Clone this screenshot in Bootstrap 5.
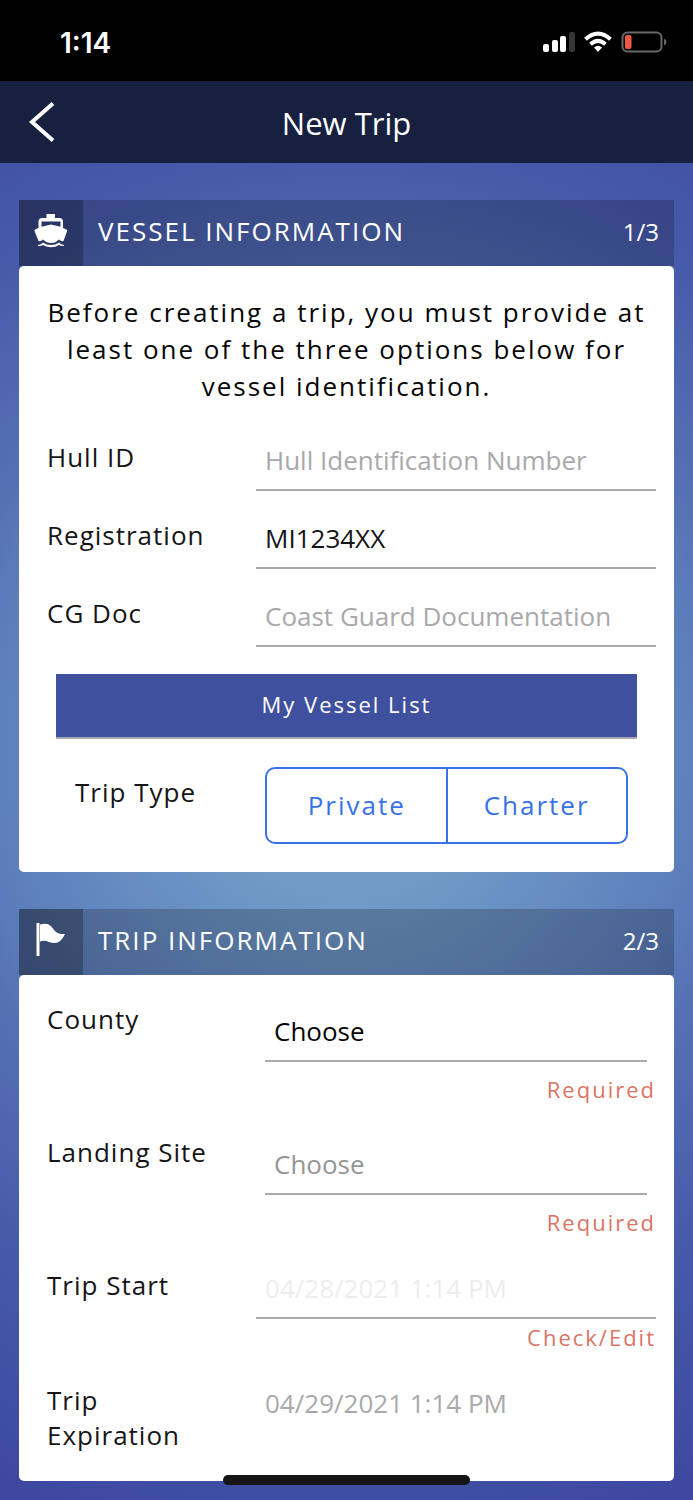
<!DOCTYPE html>
<html lang="en">
<head>
<meta charset="utf-8">
<meta name="viewport" content="width=device-width, initial-scale=1">
<title>New Trip</title>
<link href="https://cdn.jsdelivr.net/npm/bootstrap@5.3.0/dist/css/bootstrap.min.css" rel="stylesheet">
<style>
  body {
    font-family: "Open Sans", "Noto Sans", sans-serif;
    font-size: 26px;
    line-height: 35px;
    color: #151517;
    background: radial-gradient(circle farthest-corner at 50% 50%, #739fca 0%, #719bc8 17%, #5b7cba 45%, #5570b3 52%, #465aaa 72%, #3c479e 100%) no-repeat #3c479e;
    min-height: 100vh;
  }
  .status-bar { height: 81px; padding: 5px 26px 0 60px; background: #000; color: #fff; font-family: Inter, sans-serif; font-size: 28px; font-weight: 600; }
  .title-bar { height: 82px; background: #182040; color: #fff; }
  .title-bar h1 { font-size: 31px; line-height: 40px; font-weight: 400; padding-top: 2px; }
  .back-btn { width: 84px; left: 0; top: 0; color: #fff; }
  .page-main { padding: 37px 19px 19px; gap: 37px; }
  .section-head { height: 66px; background: rgba(0, 0, 0, .2); color: #fff; padding-right: 15px; }
  .section-head h2 { font-size: 26px; line-height: 35px; font-weight: 400; letter-spacing: 2px; margin: 0 0 4px 15px; }
  .section-icon { width: 64px; padding-bottom: 5px; background: rgba(0, 0, 0, .25); }
  .step-count { font-size: 24px; margin-bottom: 3px; }
  .section-body { background: #fff; border-radius: 5px; padding: 10px 18px 28px 28px; }
  .section-body.with-intro { padding-top: 28px; }
  .intro { font-size: 26px; line-height: 37px; letter-spacing: 2px; color: #050505; margin: 0 10px 18px 0; }
  .field-row { display: grid; grid-template-columns: minmax(0, 1fr) minmax(0, 2fr); column-gap: 9px; margin-bottom: 10px; }
  .field-row:last-child { margin-bottom: 0; }
  .field-row > label { padding: 17px 18px 0 0; letter-spacing: 1px; }
  .line-input { width: 100%; height: 60px; margin-top: 8px; padding: 0 9px; border: 0; border-bottom: 2px solid #a9a9a9; border-radius: 0; background: transparent; color: #151517; appearance: none; display: block; }
  .line-input::placeholder { color: #a9a9ab; opacity: 1; }
  .picker { padding: 9px; }
  .picker .line-input { color: #050505; }
  .picker .line-input:disabled { color: #959595; opacity: 1; }
  .line-input.faded { color: #ededef; }
  .line-input.plain { color: #a9a9ab; border-color: transparent; }
  .note { display: block; text-align: right; color: #db7565; font-size: 22px; line-height: 37px; letter-spacing: 2px; text-decoration: none; }
  .list-btn { display: block; width: auto; height: 65px; background: #3f509e; border: 0; border-bottom: 2px solid #a9a9b4; border-radius: 0; color: #fff; font-size: 22px; letter-spacing: 2px; padding: 0 0 3px; }
  .list-wrap { padding: 17px 19px 0 9px; }
  .type-row { margin: 28px 28px 0 28px; }
  .type-row legend { font-size: 26px; line-height: 35px; letter-spacing: 1px; padding-top: 8px; margin: 0; float: none; }
  .type-group { height: 77px; }
  .type-group .btn { flex: 1 1 0; border: 2px solid #3971e8; border-radius: 10px; color: #3971e8; font-size: 26px; line-height: 35px; letter-spacing: 2px; padding: 0; display: flex; align-items: center; justify-content: center; }
  .type-group .btn:last-child { border-left-width: 0; }
  .type-group .btn-check:checked + .btn { background: #3971e8; color: #fff; }
  .home-bar { left: 50%; bottom: 15px; width: 247px; height: 10px; margin-left: -124px; border-radius: 5px; background: #151517; }
</style>
</head>
<body>
<div class="status-bar d-flex align-items-center justify-content-between">
  <span>1:14</span>
  <svg width="124" height="24" viewBox="0 0 124 24" fill="#fff" aria-hidden="true">
    <rect x="0" y="13" width="6" height="8" rx="2"/><rect x="9" y="9" width="6" height="12" rx="2"/><rect x="17" y="5" width="6" height="16" rx="2"/><rect x="26" y="1" width="6" height="20" rx="2" fill="#363638"/>
    <g fill="none" stroke="#fff" stroke-width="4"><path d="M42.500 8.200Q55 -3 67.500 8.200"/><path d="M47.500 13.200Q55 6.600 62.500 13.200"/></g>
    <path d="M51 16.500Q55 13 59 16.500L55 21Z"/>
    <rect x="79.500" y="1.500" width="39" height="19" rx="5" fill="none" stroke="#68686a" stroke-width="2"/>
    <rect x="82" y="4" width="6.500" height="14" rx="2" fill="#ec5844"/><path d="M121 7.500q5 3.500 0 7z" fill="#68686a"/>
  </svg>
</div>
<header class="title-bar position-relative d-flex align-items-center justify-content-center">
  <button type="button" class="back-btn btn border-0 rounded-0 p-0 h-100 position-absolute" aria-label="Back">
    <svg width="28" height="42" viewBox="0 0 28 42" fill="none" stroke="currentColor" stroke-width="4"><path d="M25 2.500 4 21 25 39.500"/></svg>
  </button>
  <h1 class="m-0">New Trip</h1>
</header>
<main class="page-main d-flex flex-column">
  <section>
    <div class="section-head d-flex align-items-center">
      <span class="section-icon h-100 d-flex align-items-center justify-content-center">
        <svg width="34" height="34" viewBox="0 0 34 34" fill="#fff" aria-hidden="true">
          <path fill-rule="evenodd" d="M12.500 0h8.500v4h4.500q3.500 0 3.500 3.500V14l3.500 1.500q1 .500.600 1.600L29.500 27q-2.500.600-4.500-1.500Q21.500 29 17 29T9 25.500Q7 27.600 4.500 27L.500 17.100Q.100 16 1 15.500L4.500 14V7.500Q4.500 4 8 4h4.500ZM7.500 7.500v5.200L17 10.500l9.500 2.200V7.500Z"/>
          <path d="M4 31q3-.200 5-2.500 3.500 2.500 8 2.500t8-2.500q2 2.300 5 2.500v1q-3 .200-5-1-3.500 2.200-8 2.200T9 31q-2 1.200-5 1Z"/>
        </svg>
      </span>
      <h2>VESSEL INFORMATION</h2>
      <span class="step-count ms-auto">1/3</span>
    </div>
    <div class="section-body with-intro">
      <p class="intro text-center">Before creating a trip, you must provide at least one of the three options below for vessel identification.</p>
      <div class="field-row"><label for="hull">Hull ID</label><input id="hull" type="text" class="line-input" placeholder="Hull Identification Number"></div>
      <div class="field-row"><label for="reg">Registration</label><input id="reg" type="text" class="line-input" value="MI1234XX"></div>
      <div class="field-row"><label for="cgdoc">CG Doc</label><input id="cgdoc" type="text" class="line-input" placeholder="Coast Guard Documentation"></div>
      <div class="list-wrap d-grid"><button type="button" class="list-btn btn">My Vessel List</button></div>
      <fieldset class="type-row">
        <div class="field-row">
          <legend id="type-label">Trip Type</legend>
          <div class="type-group btn-group" role="group" aria-labelledby="type-label">
            <input type="radio" class="btn-check" name="type" id="private"><label class="btn" for="private">Private</label>
            <input type="radio" class="btn-check" name="type" id="charter"><label class="btn" for="charter">Charter</label>
          </div>
        </div>
      </fieldset>
    </div>
  </section>
  <section>
    <div class="section-head d-flex align-items-center">
      <span class="section-icon h-100 d-flex align-items-center justify-content-center">
        <svg width="34" height="34" viewBox="0 0 34 34" fill="#fff" aria-hidden="true">
          <path d="M2.500 0h3v33h-3z"/><path d="M6 1.500C12-.500 16 1 19 5.500S25 11.500 31 11Q27 20 20.500 20C15 20 12 16 6 18.500Z"/>
        </svg>
      </span>
      <h2>TRIP INFORMATION</h2>
      <span class="step-count ms-auto">2/3</span>
    </div>
    <div class="section-body">
      <div class="field-row"><label for="county">County</label>
        <div><div class="picker"><select id="county" class="line-input mt-2"><option>Choose</option></select></div><span class="note">Required</span></div></div>
      <div class="field-row"><label for="site">Landing Site</label>
        <div><div class="picker"><select id="site" class="line-input mt-2" disabled><option>Choose</option></select></div><span class="note">Required</span></div></div>
      <div class="field-row"><label for="start">Trip Start</label>
        <div><input id="start" type="text" class="line-input faded" value="04/28/2021 1:14 PM"><a href="#start" class="note">Check/Edit</a></div></div>
      <div class="field-row"><label for="expires">Trip Expiration</label>
        <input id="expires" type="text" class="line-input plain" value="04/29/2021 1:14 PM" readonly></div>
    </div>
  </section>
</main>
<div class="home-bar position-fixed"></div>
<script src="https://cdn.jsdelivr.net/npm/bootstrap@5.3.0/dist/js/bootstrap.bundle.min.js"></script>
</body>
</html>
